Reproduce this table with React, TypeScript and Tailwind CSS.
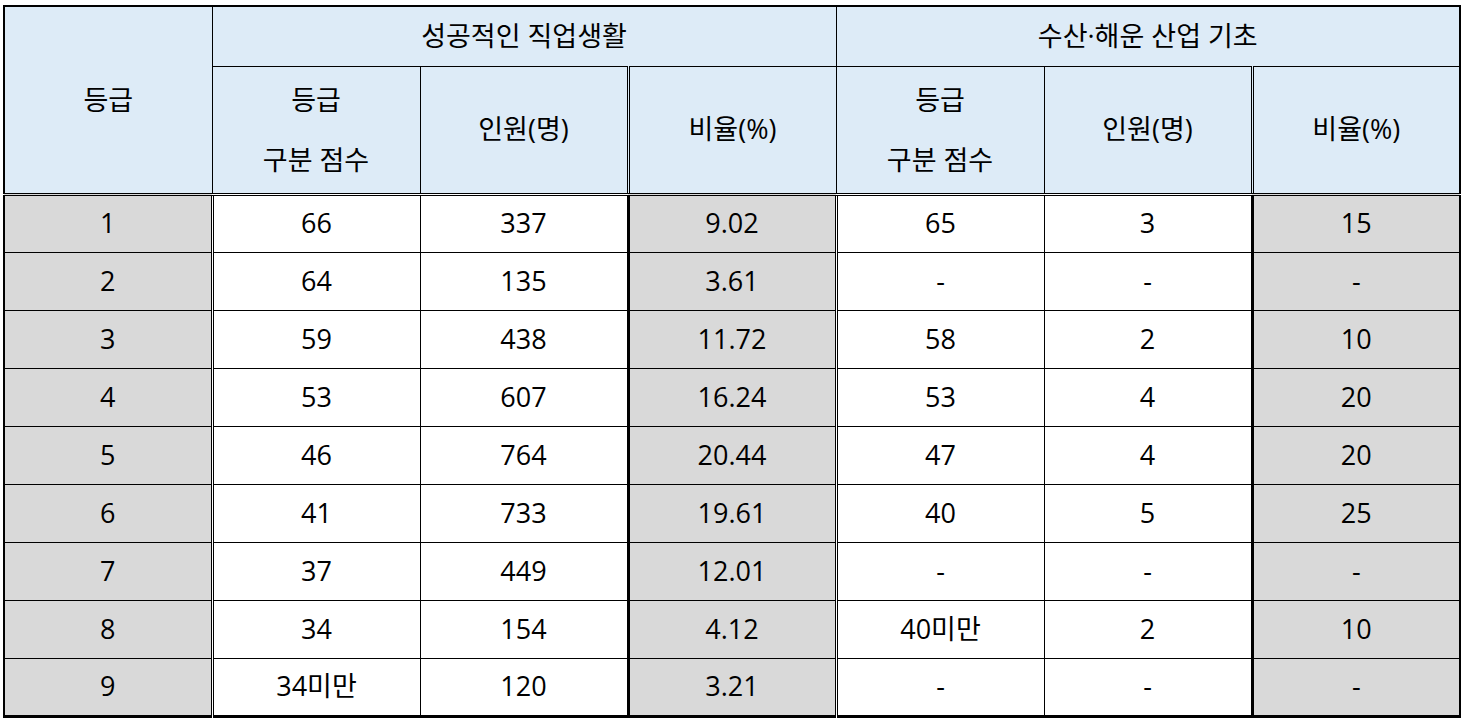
const rows: string[][] = [
  ["1", "66", "337", "9.02", "65", "3", "15"],
  ["2", "64", "135", "3.61", "-", "-", "-"],
  ["3", "59", "438", "11.72", "58", "2", "10"],
  ["4", "53", "607", "16.24", "53", "4", "20"],
  ["5", "46", "764", "20.44", "47", "4", "20"],
  ["6", "41", "733", "19.61", "40", "5", "25"],
  ["7", "37", "449", "12.01", "-", "-", "-"],
  ["8", "34", "154", "4.12", "40미만", "2", "10"],
  ["9", "34미만", "120", "3.21", "-", "-", "-"],
];

// per-column body styles: grey fill + the heavier rules the source table uses
const bodyCol = [
  "bg-[#d9d9d9]",
  "bg-white border-l-[3px] [border-left-style:double]",
  "bg-white",
  "bg-[#d9d9d9] border-l-[3px]",
  "bg-white border-l-[3px] [border-left-style:double]",
  "bg-white",
  "bg-[#d9d9d9] border-l-[3px]",
];

const th = "font-normal border border-black";
const thBottom = "border-b-[3px] [border-bottom-style:double]";

export default function App() {
  return (
    <div
      className="bg-white w-[1465px] h-[721px] pt-[5px] pl-[3px] text-black"
      style={{ fontFamily: '"Open Sans", "Noto Sans CJK KR", sans-serif' }}
    >
      <table className="table-fixed border-collapse border-2 border-black border-b-[3px] w-[1457px] text-[27px]">
        <colgroup>
          {bodyCol.map((_, i) => (
            <col key={i} className="w-[208px]" />
          ))}
        </colgroup>
        <thead>
          <tr className="h-[60px] bg-[#ddebf7]">
            <th rowSpan={2} className={`${th} ${thBottom}`}>
              등급
            </th>
            <th colSpan={3} className={th}>
              성공적인 직업생활
            </th>
            <th colSpan={3} className={th}>
              수산·해운 산업 기초
            </th>
          </tr>
          <tr className="h-[128px] bg-[#ddebf7]">
            <th className={`${th} ${thBottom} leading-[60px]`}>
              등급
              <br />
              구분 점수
            </th>
            <th className={`${th} ${thBottom}`}>인원(명)</th>
            <th className={`${th} ${thBottom} border-l-[3px] [border-left-style:double]`}>비율(%)</th>
            <th className={`${th} ${thBottom} leading-[60px]`}>
              등급
              <br />
              구분 점수
            </th>
            <th className={`${th} ${thBottom}`}>인원(명)</th>
            <th className={`${th} ${thBottom} border-l-[3px] [border-left-style:double]`}>비율(%)</th>
          </tr>
        </thead>
        <tbody>
          {rows.map((r, ri) => (
            <tr key={ri} className="h-[58px]">
              {r.map((c, ci) => (
                <td key={ci} className={`border border-black text-center p-0 ${bodyCol[ci]}`}>
                  {c}
                </td>
              ))}
            </tr>
          ))}
        </tbody>
      </table>
    </div>
  );
}
